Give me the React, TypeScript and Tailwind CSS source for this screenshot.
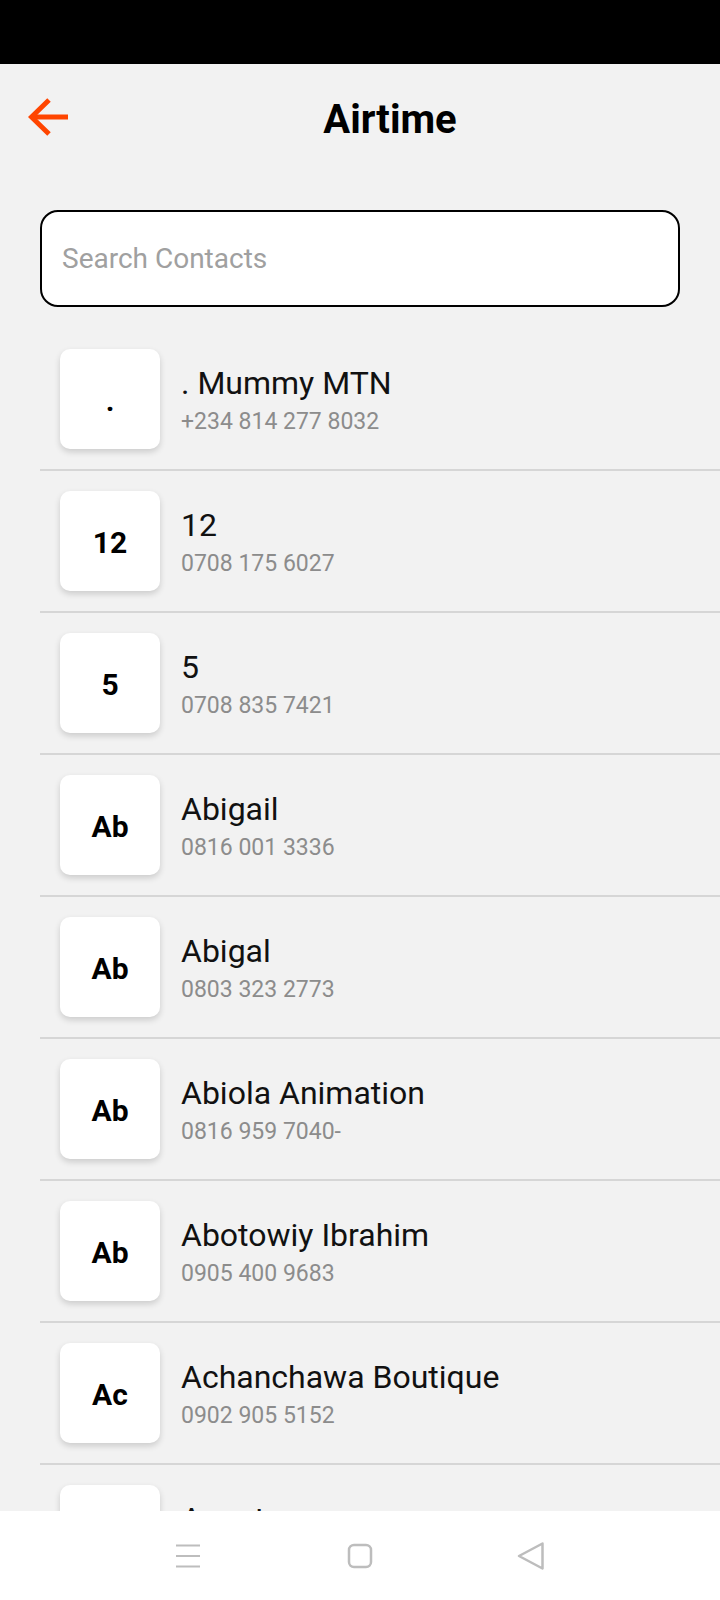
import React from "react";

type Contact = { initial: string; name: string; phone: string };

const contacts: Contact[] = [
  { initial: ".", name: ". Mummy MTN", phone: "+234 814 277 8032" },
  { initial: "12", name: "12", phone: "0708 175 6027" },
  { initial: "5", name: "5", phone: "0708 835 7421" },
  { initial: "Ab", name: "Abigail", phone: "0816 001 3336" },
  { initial: "Ab", name: "Abigal", phone: "0803 323 2773" },
  { initial: "Ab", name: "Abiola Animation", phone: "0816 959 7040-" },
  { initial: "Ab", name: "Abotowiy Ibrahim", phone: "0905 400 9683" },
  { initial: "Ac", name: "Achanchawa Boutique", phone: "0902 905 5152" },
  { initial: "Ag", name: "Agent", phone: "0803 555 1204" },
];

function Row({ c }: { c: Contact }) {
  return (
    <div className="flex items-center gap-[21px] pl-5 pt-5 pb-5 border-b-2 border-[#d6d6d6]">
      <div className="w-[100px] h-[100px] shrink-0 rounded-[10px] bg-white shadow-[0_3px_6px_rgba(0,0,0,0.16)] flex items-center justify-center pt-[2px]">
        <span className="text-[30px] font-bold text-black leading-[35px]">{c.initial}</span>
      </div>
      <div className="flex flex-col pt-[2px]">
        <span className="text-[32px] leading-[38px] text-[#111111]">{c.name}</span>
        <span className="text-[23px] leading-[28px] mt-[6px] text-[#8c8c8c]">{c.phone}</span>
      </div>
    </div>
  );
}

export default function App() {
  return (
    <div className="w-[720px] h-[1600px] flex flex-col overflow-hidden bg-[#f2f2f2] font-[Roboto,'Noto_Sans',sans-serif]">
      <div className="h-[64px] shrink-0 bg-black" />
      <div className="flex-1 overflow-hidden flex flex-col">
        <div className="h-[106px] shrink-0 flex items-center pl-7 pr-2">
          <svg width="40" height="38" viewBox="0 0 40 38" fill="none">
            <path d="M3 19 H40" stroke="#ff4500" strokeWidth="5" />
            <path d="M21 2 L3.5 19 L21 36" stroke="#ff4500" strokeWidth="5" />
          </svg>
          <div className="flex-1 text-center pt-[4px] text-[40px] leading-[47px] font-bold text-black">
            Airtime
          </div>
        </div>
        <div className="mx-10 mt-10 h-[97px] shrink-0 rounded-[18px] border-2 border-black bg-white flex items-center px-5">
          <input
            className="w-full bg-transparent outline-none text-[28px] leading-[33px] text-black placeholder:text-[#a0a0a0]"
            placeholder="Search Contacts"
          />
        </div>
        <div className="ml-10 mt-[22px]">
          {contacts.map((c, i) => (
            <Row key={i} c={c} />
          ))}
        </div>
      </div>
      <div className="h-[89px] shrink-0 bg-white flex items-center justify-center">
        <div className="flex items-center">
          <svg width="24" height="24" viewBox="0 0 24 24">
            <path d="M0 1.5 H24 M0 12 H24 M0 22.5 H24" stroke="#bdbdbd" strokeWidth="2" />
          </svg>
          <svg width="26" height="26" viewBox="0 0 26 26" className="ml-[147px]" fill="none">
            <rect x="2" y="2" width="22" height="22" rx="5" stroke="#bdbdbd" strokeWidth="2.5" />
          </svg>
          <svg width="28" height="28" viewBox="0 0 28 28" className="ml-[144px]" fill="none">
            <path d="M25.5 1.5 L2 14 L25.5 26.5 Z" stroke="#bdbdbd" strokeWidth="2.5" strokeLinejoin="round" />
          </svg>
        </div>
      </div>
    </div>
  );
}
